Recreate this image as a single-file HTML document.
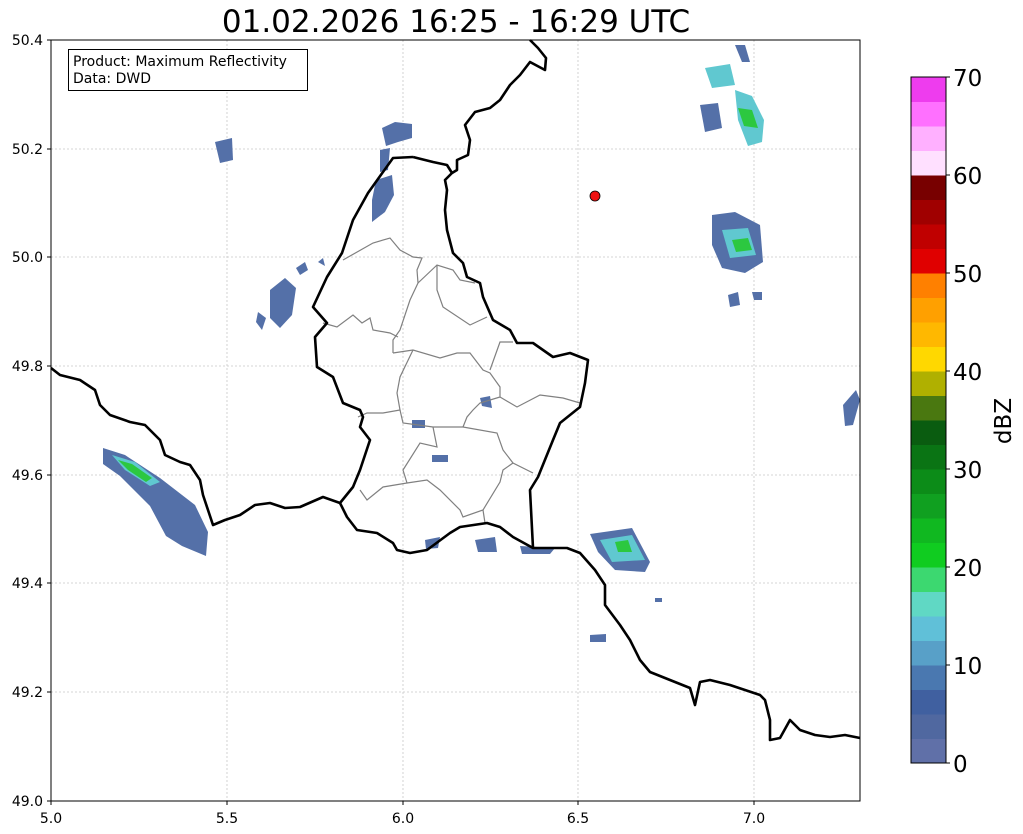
<!DOCTYPE html>
<html><head><meta charset="utf-8"><style>
html,body{margin:0;padding:0;background:#fff;}
svg{display:block;font-family:"DejaVu Sans","Liberation Sans",sans-serif;}
</style></head><body>
<svg width="1023" height="834" viewBox="0 0 1023 834" xmlns="http://www.w3.org/2000/svg">
<rect width="1023" height="834" fill="#fff"/>
<text x="456" y="32" font-size="31" text-anchor="middle" fill="#000">01.02.2026 16:25 - 16:29 UTC</text>
<g stroke="#c8c8c8" stroke-width="0.8" stroke-dasharray="2,2">
<line x1="227" y1="40" x2="227" y2="801"/><line x1="403" y1="40" x2="403" y2="801"/><line x1="578" y1="40" x2="578" y2="801"/><line x1="754" y1="40" x2="754" y2="801"/>
<line x1="51" y1="149" x2="860" y2="149"/><line x1="51" y1="257" x2="860" y2="257"/><line x1="51" y1="366" x2="860" y2="366"/><line x1="51" y1="475" x2="860" y2="475"/><line x1="51" y1="583" x2="860" y2="583"/><line x1="51" y1="692" x2="860" y2="692"/>
</g>
<g fill="#5470a8">
<polygon points="103,448 125,455 160,478 195,505 208,532 206,556 182,546 166,536 150,506 120,476 103,464"/>
<polygon points="270,290 285,278 296,288 292,315 280,328 270,318"/>
<polygon points="258,312 266,318 262,330 256,322"/>
<polygon points="215,142 232,138 233,160 220,163"/>
<polygon points="382,128 395,122 412,124 412,138 398,142 386,146"/>
<polygon points="380,150 390,148 388,170 380,172"/>
<polygon points="376,180 392,175 394,195 385,212 372,222 372,200"/>
<polygon points="700,105 718,103 722,128 705,132"/>
<polygon points="712,215 735,212 760,225 763,262 745,273 722,268 712,245"/>
<polygon points="728,295 738,292 740,305 730,307"/><polygon points="752,292 762,292 762,300 754,300"/>
<polygon points="590,534 632,528 650,562 645,572 615,570 598,552"/>
<polygon points="843,405 856,390 860,400 853,425 845,426"/>
<polygon points="475,540 495,537 497,552 478,552"/><polygon points="520,546 555,548 550,554 522,554"/>
<polygon points="425,540 440,537 438,548 426,549"/><polygon points="590,635 606,634 606,642 590,642"/>
<polygon points="480,398 490,396 492,408 482,406"/><polygon points="412,420 425,420 425,428 412,428"/>
<polygon points="432,455 448,455 448,462 432,462"/>
<polygon points="735,45 745,45 750,62 742,62"/><polygon points="655,598 662,598 662,602 655,602"/>
<polygon points="296,268 305,262 308,270 300,275"/><polygon points="318,262 323,258 325,266"/>
</g>
<g fill="#60c8d0">
<polygon points="705,68 730,64 735,85 712,88"/>
<polygon points="735,90 752,96 764,120 762,142 748,146 738,120"/>
<polygon points="112,455 135,462 160,482 150,486 125,470"/>
<polygon points="722,230 748,228 756,255 730,258"/>
<polygon points="600,540 632,535 645,560 612,562"/>
</g>
<g fill="#2cc840">
<polygon points="118,460 132,464 152,478 146,482 128,470"/>
<polygon points="738,108 752,110 758,128 744,126"/>
<polygon points="732,240 748,238 752,250 736,252"/>
<polygon points="615,542 628,540 632,552 618,552"/>
</g>
<g fill="none" stroke="#808080" stroke-width="1.2">
<polyline points="343,260 373,243 390,238 400,250 413,257 422,258 417,270 418,283 410,300 400,330 393,340 393,353"/>
<polyline points="323,323 337,327 353,315 362,323 370,318 373,330 390,333 398,337"/>
<polyline points="418,283 437,265 453,270 460,280 475,283"/>
<polyline points="437,265 437,290 443,307 470,325 487,317"/>
<polyline points="393,353 413,350 440,358 457,353 470,353 483,370 490,373 500,387 500,397 480,403 473,410 467,417 463,427"/>
<polyline points="490,370 500,342 513,342"/>
<polyline points="500,397 517,407 540,395 563,398 580,403"/>
<polyline points="413,350 400,377 397,393 400,410 383,413 367,413 358,417"/>
<polyline points="400,410 403,423 433,427 463,427 497,433 503,450 513,463 533,473"/>
<polyline points="433,427 437,447 420,443 403,470 407,483 383,487 367,500 360,490"/>
<polyline points="407,483 427,480 440,490 460,510 463,517 483,510 500,482 503,470 513,463"/>
<polyline points="483,510 485,523"/>
</g>
<g fill="none" stroke="#000" stroke-width="2.6" stroke-linejoin="round">
<polyline points="51,368 60,375 80,380 95,390 100,405 110,415 130,422 145,425 160,440 165,455 180,462 190,465 200,480 203,495 208,510 213,525 225,520 240,515 255,505 270,503 285,508 300,507 323,497 340,503"/>
<polyline points="413,157 393,158 368,193 353,220 342,253 327,277 313,307 327,323 315,337 317,367 333,377 343,403 360,410 363,417 360,427 370,440 360,470 353,487 340,503 347,517 357,530 377,533 393,543 397,550 410,553 427,550 450,533 460,527 487,523 500,527 513,537 533,548 567,548 580,553 595,570 605,585 605,605 620,625 630,640 640,660 650,672 670,680 690,688 695,705 700,682 710,680 730,685 745,690 760,695 765,700 770,720 770,740 780,738 790,720 800,730 815,735 830,737 845,735 860,738"/>
<polyline points="533,548 530,490 538,477 553,440 560,423 580,407 585,383 588,360 570,353 553,357 533,343 517,343 510,330 493,320 483,297 480,283 467,277 463,263 453,253 447,230 445,210 447,190 445,180 452,173 447,165 433,162 413,157"/>
<polyline points="452,173 457,170 457,160 468,155 470,140 465,125 475,112 490,108 500,100 510,85 520,75 530,62 545,70 546,58 538,48 530,40"/>
</g>
<circle cx="595" cy="196" r="5" fill="#ee1111" stroke="#000" stroke-width="0.8"/>
<rect x="68.5" y="49.5" width="239" height="41" fill="#fff" stroke="#000" stroke-width="1"/>
<text x="73" y="66" font-size="14">Product: Maximum Reflectivity</text>
<text x="73" y="83" font-size="14">Data: DWD</text>
<rect x="51" y="40" width="809" height="761" fill="none" stroke="#000" stroke-width="1"/>
<g stroke="#000" stroke-width="1">
<line x1="51" y1="801" x2="51" y2="805"/><line x1="227" y1="801" x2="227" y2="805"/><line x1="403" y1="801" x2="403" y2="805"/><line x1="578" y1="801" x2="578" y2="805"/><line x1="754" y1="801" x2="754" y2="805"/>
<line x1="47" y1="40" x2="51" y2="40"/><line x1="47" y1="149" x2="51" y2="149"/><line x1="47" y1="257" x2="51" y2="257"/><line x1="47" y1="366" x2="51" y2="366"/><line x1="47" y1="475" x2="51" y2="475"/><line x1="47" y1="583" x2="51" y2="583"/><line x1="47" y1="692" x2="51" y2="692"/><line x1="47" y1="801" x2="51" y2="801"/>
</g>
<g font-size="14" text-anchor="middle">
<text x="51" y="823">5.0</text><text x="227" y="823">5.5</text><text x="403" y="823">6.0</text><text x="578" y="823">6.5</text><text x="754" y="823">7.0</text>
</g>
<g font-size="14" text-anchor="end">
<text x="43" y="45">50.4</text><text x="43" y="154">50.2</text><text x="43" y="262">50.0</text><text x="43" y="371">49.8</text><text x="43" y="480">49.6</text><text x="43" y="588">49.4</text><text x="43" y="697">49.2</text><text x="43" y="806">49.0</text>
</g>
<g>
<rect x="911" y="738.5" width="35" height="25" fill="#6070a8"/>
<rect x="911" y="714" width="35" height="25" fill="#5068a0"/>
<rect x="911" y="689.5" width="35" height="25" fill="#4060a0"/>
<rect x="911" y="665" width="35" height="25" fill="#4a78b0"/>
<rect x="911" y="640.5" width="35" height="25" fill="#58a0c8"/>
<rect x="911" y="616" width="35" height="25" fill="#60c0d8"/>
<rect x="911" y="591.5" width="35" height="25" fill="#60d8c4"/>
<rect x="911" y="567" width="35" height="25" fill="#3cd870"/>
<rect x="911" y="542.5" width="35" height="25" fill="#10cc20"/>
<rect x="911" y="518" width="35" height="25" fill="#10b820"/>
<rect x="911" y="493.5" width="35" height="25" fill="#10a020"/>
<rect x="911" y="469" width="35" height="25" fill="#0c8c18"/>
<rect x="911" y="444.5" width="35" height="25" fill="#0a7414"/>
<rect x="911" y="420" width="35" height="25" fill="#0a5c10"/>
<rect x="911" y="395.5" width="35" height="25" fill="#4a7810"/>
<rect x="911" y="371" width="35" height="25" fill="#b0b000"/>
<rect x="911" y="346.5" width="35" height="25" fill="#ffd800"/>
<rect x="911" y="322" width="35" height="25" fill="#ffb800"/>
<rect x="911" y="297.5" width="35" height="25" fill="#ffa000"/>
<rect x="911" y="273" width="35" height="25" fill="#ff8000"/>
<rect x="911" y="248.5" width="35" height="25" fill="#e00000"/>
<rect x="911" y="224" width="35" height="25" fill="#c00000"/>
<rect x="911" y="199.5" width="35" height="25" fill="#a00000"/>
<rect x="911" y="175" width="35" height="25" fill="#780000"/>
<rect x="911" y="150.5" width="35" height="25" fill="#ffe0ff"/>
<rect x="911" y="126" width="35" height="25" fill="#ffb0ff"/>
<rect x="911" y="101.5" width="35" height="25" fill="#ff70ff"/>
<rect x="911" y="77" width="35" height="25" fill="#ee3cee"/>
<rect x="911" y="77" width="35" height="686" fill="none" stroke="#000" stroke-width="1"/>
</g>
<g stroke="#000" stroke-width="1">
<line x1="946" y1="77" x2="950" y2="77"/><line x1="946" y1="175" x2="950" y2="175"/><line x1="946" y1="273" x2="950" y2="273"/><line x1="946" y1="371" x2="950" y2="371"/><line x1="946" y1="469" x2="950" y2="469"/><line x1="946" y1="567" x2="950" y2="567"/><line x1="946" y1="665" x2="950" y2="665"/><line x1="946" y1="763" x2="950" y2="763"/>
</g>
<g font-size="23">
<text x="953" y="86">70</text><text x="953" y="184">60</text><text x="953" y="282">50</text><text x="953" y="380">40</text><text x="953" y="478">30</text><text x="953" y="576">20</text><text x="953" y="674">10</text><text x="953" y="772">0</text>
</g>
<text x="0" y="0" font-size="23" text-anchor="middle" transform="translate(1011,421) rotate(-90)">dBZ</text>
</svg>
</body></html>
